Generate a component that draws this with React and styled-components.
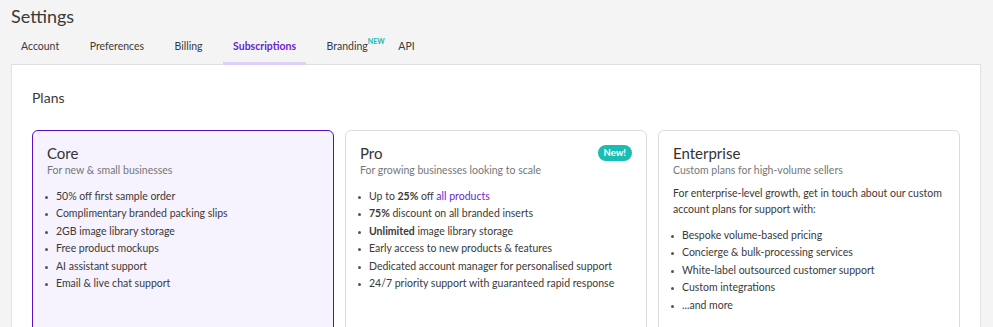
import styled, { createGlobalStyle } from "styled-components";

const GlobalStyle = createGlobalStyle`
  body {
    margin: 0;
    background: #f4f4f4;
    font-family: "Lato", "Noto Sans", sans-serif;
    color: #333;
  }
`;

const Page = styled.div`
  padding: 4px 12px 0 11px;
`;

const Title = styled.h1`
  margin: 0;
  font-size: 18px;
  font-weight: 400;
  color: #3a3a3a;
  line-height: 24px;
`;

const Tabs = styled.nav`
  display: flex;
  gap: 10.5px;
  margin-top: 11px;
  border-bottom: 1px solid #e0e0e0;
`;

const Tab = styled.div`
  position: relative;
  padding: 0 10px 9px;
  font-size: 10.5px;
  line-height: 14px;
  color: ${(p) => (p.$active ? "#6a1fd1" : "#3a3a3a")};
  font-weight: ${(p) => (p.$active ? 700 : 400)};
  border-bottom: 3px solid ${(p) => (p.$active ? "#dccff8" : "transparent")};
  margin-bottom: -1px;
`;

const NewTag = styled.span`
  position: absolute;
  left: calc(100% - 10px);
  top: -3px;
  font-size: 7px;
  font-weight: 700;
  color: #19b9ae;
  line-height: 10px;
`;

const Panel = styled.section`
  background: #fff;
  border: 1px solid #e2e2e2;
  border-top: none;
  padding: 24px 20px 20px;
  min-height: 300px;
`;

const PanelTitle = styled.h2`
  margin: 0 0 24px;
  font-size: 14px;
  font-weight: 400;
  color: #3a3a3a;
`;

const Cards = styled.div`
  display: grid;
  grid-template-columns: repeat(3, 302px);
  gap: 11px;
`;

const Card = styled.div`
  position: relative;
  border: 1px solid ${(p) => (p.$selected ? "#5a10c6" : "#dcdcdc")};
  background: ${(p) => (p.$selected ? "#f6f2fe" : "#fff")};
  border-radius: 6px;
  padding: 13px 14px 40px;
  min-height: 200px;
`;

const CardTitle = styled.h3`
  margin: 0;
  font-size: 15px;
  font-weight: 400;
  color: #333;
  line-height: 18px;
`;

const CardSub = styled.p`
  margin: 1px 0 0;
  font-size: 10.5px;
  color: #777;
  line-height: 14px;
`;

const Intro = styled.p`
  margin: 8px 0 10px;
  font-size: 10.5px;
  line-height: 16px;
  color: #3a3a3a;
`;

const List = styled.ul`
  margin: ${(p) => (p.$tight ? 0 : "11px")} 0 0;
  padding: 0 0 0 9px;
  list-style: none;
`;

const Item = styled.li`
  position: relative;
  font-size: 10.5px;
  line-height: 17.4px;
  color: #3a3a3a;
  &::before {
    content: "";
    position: absolute;
    left: -11px;
    top: 8px;
    width: 3px;
    height: 3px;
    border-radius: 50%;
    background: #555;
  }
`;

const Badge = styled.span`
  position: absolute;
  top: 14px;
  right: 14px;
  background: #19bdb3;
  color: #fff;
  font-size: 9.5px;
  font-weight: 700;
  padding: 2px 6px;
  border-radius: 10px;
  line-height: 12px;
`;

const Link = styled.a`
  color: #6a1fd1;
  text-decoration: none;
`;

const Strong = styled.b`
  font-weight: 700;
`;

export default function App() {
  return (
    <>
      <GlobalStyle />
      <Page>
        <Title>Settings</Title>
        <Tabs>
          <Tab>Account</Tab>
          <Tab>Preferences</Tab>
          <Tab>Billing</Tab>
          <Tab $active>Subscriptions</Tab>
          <Tab>
            Branding
            <NewTag>NEW</NewTag>
          </Tab>
          <Tab>API</Tab>
        </Tabs>
        <Panel>
          <PanelTitle>Plans</PanelTitle>
          <Cards>
            <Card $selected>
              <CardTitle>Core</CardTitle>
              <CardSub>For new &amp; small businesses</CardSub>
              <List>
                <Item>50% off first sample order</Item>
                <Item>Complimentary branded packing slips</Item>
                <Item>2GB image library storage</Item>
                <Item>Free product mockups</Item>
                <Item>AI assistant support</Item>
                <Item>Email &amp; live chat support</Item>
              </List>
            </Card>
            <Card>
              <Badge>New!</Badge>
              <CardTitle>Pro</CardTitle>
              <CardSub>For growing businesses looking to scale</CardSub>
              <List>
                <Item>
                  Up to <Strong>25%</Strong> off <Link href="#">all products</Link>
                </Item>
                <Item>
                  <Strong>75%</Strong> discount on all branded inserts
                </Item>
                <Item>
                  <Strong>Unlimited</Strong> image library storage
                </Item>
                <Item>Early access to new products &amp; features</Item>
                <Item>Dedicated account manager for personalised support</Item>
                <Item>24/7 priority support with guaranteed rapid response</Item>
              </List>
            </Card>
            <Card>
              <CardTitle>Enterprise</CardTitle>
              <CardSub>Custom plans for high-volume sellers</CardSub>
              <Intro>
                For enterprise-level growth, get in touch about our custom
                account plans for support with:
              </Intro>
              <List $tight>
                <Item>Bespoke volume-based pricing</Item>
                <Item>Concierge &amp; bulk-processing services</Item>
                <Item>White-label outsourced customer support</Item>
                <Item>Custom integrations</Item>
                <Item>...and more</Item>
              </List>
            </Card>
          </Cards>
        </Panel>
      </Page>
    </>
  );
}
